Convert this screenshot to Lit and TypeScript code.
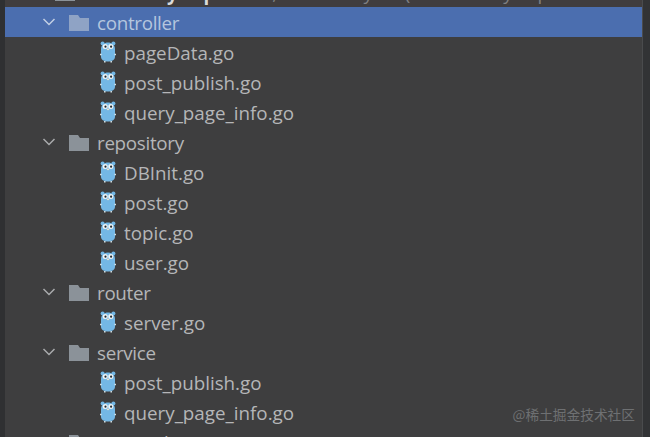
import { LitElement, html, css, svg } from 'lit';
import { customElement } from 'lit/decorators.js';

type Row = { name: string; folder?: boolean; selected?: boolean };

const rows: Row[] = [
  { name: 'controller', folder: true, selected: true },
  { name: 'pageData.go' },
  { name: 'post_publish.go' },
  { name: 'query_page_info.go' },
  { name: 'repository', folder: true },
  { name: 'DBInit.go' },
  { name: 'post.go' },
  { name: 'topic.go' },
  { name: 'user.go' },
  { name: 'router', folder: true },
  { name: 'server.go' },
  { name: 'service', folder: true },
  { name: 'post_publish.go' },
  { name: 'query_page_info.go' },
  { name: 'mongod', folder: true },
];

const chevron = svg`<svg class="chevron" width="14" height="10" viewBox="0 0 14 10"><path d="M1.5 2 L7 7.5 L12.5 2" fill="none" stroke="currentColor" stroke-width="1.5"/></svg>`;

const folder = svg`<svg class="folder" width="22" height="18" viewBox="0 0 22 18"><path d="M1 1 H10 L12 4 H21 V17 H1 Z" fill="currentColor"/></svg>`;

const gopher = svg`<svg class="gopher" width="16" height="22" viewBox="0 0 16 22">
  <circle cx="2.6" cy="2.6" r="2" fill="#74b8e6"/>
  <circle cx="13.4" cy="2.6" r="2" fill="#74b8e6"/>
  <path d="M1 8 C1 -0.8 15 -0.8 15 8 V16 C15 22 1 22 1 16 Z" fill="#74b8e6"/>
  <path d="M0 13.5 H1.6 M14.4 13.5 H16 M4.8 20 V21.4 M11.2 20 V21.4" stroke="#d6e4ea" stroke-width="1.5"/>
  <circle cx="5.2" cy="5.6" r="2.5" fill="#f2f5f6"/>
  <circle cx="10.8" cy="5.6" r="2.5" fill="#f2f5f6"/>
  <circle cx="5.5" cy="5.7" r="1.1" fill="#222b33"/>
  <circle cx="11.1" cy="5.7" r="1.1" fill="#222b33"/>
  <ellipse cx="8" cy="8.4" rx="1.2" ry="0.8" fill="#e9dcc8"/>
</svg>`;

@customElement('app-root')
export class AppRoot extends LitElement {
  static styles = css`
    :host {
      display: flex;
      flex-direction: column;
      position: relative;
      box-sizing: border-box;
      width: 650px;
      height: 437px;
      overflow: hidden;
      background: #3e3e3f;
      border-left: 5px solid #2f3032;
      border-right: 7px solid #323335;
      font-family: 'Open Sans', 'Noto Sans', sans-serif;
      font-size: 18.8px;
      color: #b5b6b8;
    }

    .tree {
      display: flex;
      flex-direction: column;
      flex: none;
      margin-top: -23px;
      border-right: 1px solid #4a4b4d;
    }

    .row {
      display: flex;
      align-items: center;
      flex: none;
      height: 30px;
      white-space: nowrap;
    }

    .row span {
      padding-top: 2px;
    }

    .row.selected {
      background: #4b6eaf;
      color: #b5c6de;
    }

    .head {
      background: #403d3e;
      padding-left: 37px;
    }

    .head .name {
      margin-left: 18px;
      color: #d9dadb;
      font-weight: 700;
    }

    .head .path {
      margin-left: 4px;
      color: #7f8082;
    }

    .dir {
      padding-left: 37px;
    }

    .dir .name {
      margin-left: 7px;
      letter-spacing: -0.3px;
    }

    .chevron {
      color: #a9abad;
    }

    .folder {
      margin: 2px 0 0 12px;
      color: #8b9299;
    }

    .selected .chevron {
      color: #c2cfe3;
    }

    .selected .folder {
      color: #8fa3c5;
    }

    .file {
      gap: 8px;
      padding-left: 95px;
    }

    .mark {
      position: absolute;
      right: 8px;
      bottom: 13px;
      font-family: 'Noto Sans CJK SC', 'Noto Sans', sans-serif;
      font-size: 13.7px;
      color: #6e7072;
    }
  `;

  renderRow(row: Row) {
    if (row.folder) {
      return html`<div class="row dir ${row.selected ? 'selected' : ''}">
        ${chevron}${folder}<span class="name">${row.name}</span>
      </div>`;
    }
    return html`<div class="row file">${gopher}<span>${row.name}</span></div>`;
  }

  render() {
    return html`
      <div class="tree">
        <div class="row head">
          ${folder}<span class="name">Go-study-top</span>
          <span class="path">Demo, E:\\G\\study E:\\ (E:\\Go\\study\\top</span>
        </div>
        ${rows.map((r) => this.renderRow(r))}
      </div>
      <div class="mark">@稀土掘金技术社区</div>
    `;
  }
}
